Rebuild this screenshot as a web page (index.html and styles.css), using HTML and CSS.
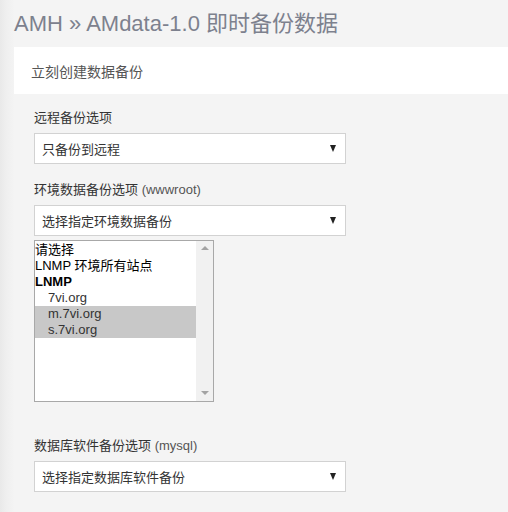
FILE: index.html
```html
<!DOCTYPE html>
<html>
<head>
<meta charset="utf-8">
<link rel="stylesheet" href="styles.css">
</head>
<body>
<div class="page">
  <h1 class="title">AMH » AMdata-1.0 即时备份数据</h1>
  <div class="panel">
    <div class="panel-head">立刻创建数据备份</div>
    <div class="panel-body">
      <div class="field">
        <div class="label">远程备份选项</div>
        <div class="select"><span>只备份到远程</span><span class="arrow"></span></div>
      </div>
      <div class="field">
        <div class="label">环境数据备份选项 <span class="latin">(wwwroot)</span></div>
        <div class="select"><span>选择指定环境数据备份</span><span class="arrow"></span></div>
        <div class="listbox">
          <div class="options">
            <div class="opt">请选择</div>
            <div class="opt">LNMP 环境所有站点</div>
            <div class="opt group">LNMP</div>
            <div class="opt sub">7vi.org</div>
            <div class="opt sub selected">m.7vi.org</div>
            <div class="opt sub selected">s.7vi.org</div>
          </div>
          <div class="scrollbar">
            <span class="sb-up"></span>
            <span class="sb-down"></span>
          </div>
        </div>
      </div>
      <div class="field field-db">
        <div class="label">数据库软件备份选项 <span class="latin">(mysql)</span></div>
        <div class="select"><span>选择指定数据库软件备份</span><span class="arrow"></span></div>
      </div>
    </div>
  </div>
</div>
</body>
</html>
```

FILE: styles.css
```css
html, body {
  margin: 0;
  padding: 0;
}
body {
  background: #f4f4f4;
  font-family: "Liberation Sans", "Noto Sans CJK SC", sans-serif;
  color: #333;
  width: 508px;
  height: 512px;
  overflow: hidden;
}
.page {
  padding-left: 14px;
  min-height: 512px;
  background: linear-gradient(to right, #e9e9e9 0px, #efefef 6px, #f3f3f3 13px, #f4f4f4 14px);
}
.title {
  margin: 0;
  padding-top: 11px;
  height: 47px;
  box-sizing: border-box;
  font-size: 22px;
  line-height: 26px;
  font-weight: normal;
  color: #7d818e;
  white-space: nowrap;
}
.panel-head {
  background: #fff;
  height: 47px;
  display: flex;
  align-items: center;
  padding-left: 17px;
  font-size: 14px;
  color: #555;
}
.panel-body {
  padding: 16px 0 0 20px;
}
.field {
  display: flex;
  flex-direction: column;
  align-items: flex-start;
}
.label {
  font-size: 13px;
  line-height: 16px;
  color: #333;
  margin-bottom: 7px;
}
.latin {
  color: #555;
}
.select {
  width: 312px;
  height: 31px;
  box-sizing: border-box;
  border: 1px solid #d2d2d2;
  background: #fff;
  display: flex;
  align-items: center;
  justify-content: space-between;
  padding: 0 9px 0 7px;
  font-size: 13px;
  color: #333;
  margin-bottom: 18px;
}
.arrow {
  width: 0;
  height: 0;
  border-left: 3.5px solid transparent;
  border-right: 3.5px solid transparent;
  border-top: 7px solid #222;
}
.field .select + .listbox {
  margin-top: -14px;
}
.listbox {
  width: 180px;
  height: 162px;
  box-sizing: border-box;
  border: 1px solid #a8a8a8;
  background: #fff;
  display: flex;
  margin-bottom: 36px;
}
.options {
  flex: 1;
  padding-top: 1px;
}
.opt {
  font-size: 13px;
  line-height: 16px;
  height: 16px;
  color: #000;
  white-space: nowrap;
}
.opt.group {
  font-weight: bold;
}
.opt.sub {
  padding-left: 13px;
  color: #333;
}
.opt.selected {
  background: #c8c8c8;
}
.scrollbar {
  width: 17px;
  background: #f1f1f1;
  display: flex;
  flex-direction: column;
  justify-content: space-between;
  align-items: center;
  padding: 5px 0 6px;
}
.sb-up {
  width: 0;
  height: 0;
  border-left: 4px solid transparent;
  border-right: 4px solid transparent;
  border-bottom: 4px solid #a3a3a3;
}
.sb-down {
  width: 0;
  height: 0;
  border-left: 4px solid transparent;
  border-right: 4px solid transparent;
  border-top: 4px solid #a3a3a3;
}
```
